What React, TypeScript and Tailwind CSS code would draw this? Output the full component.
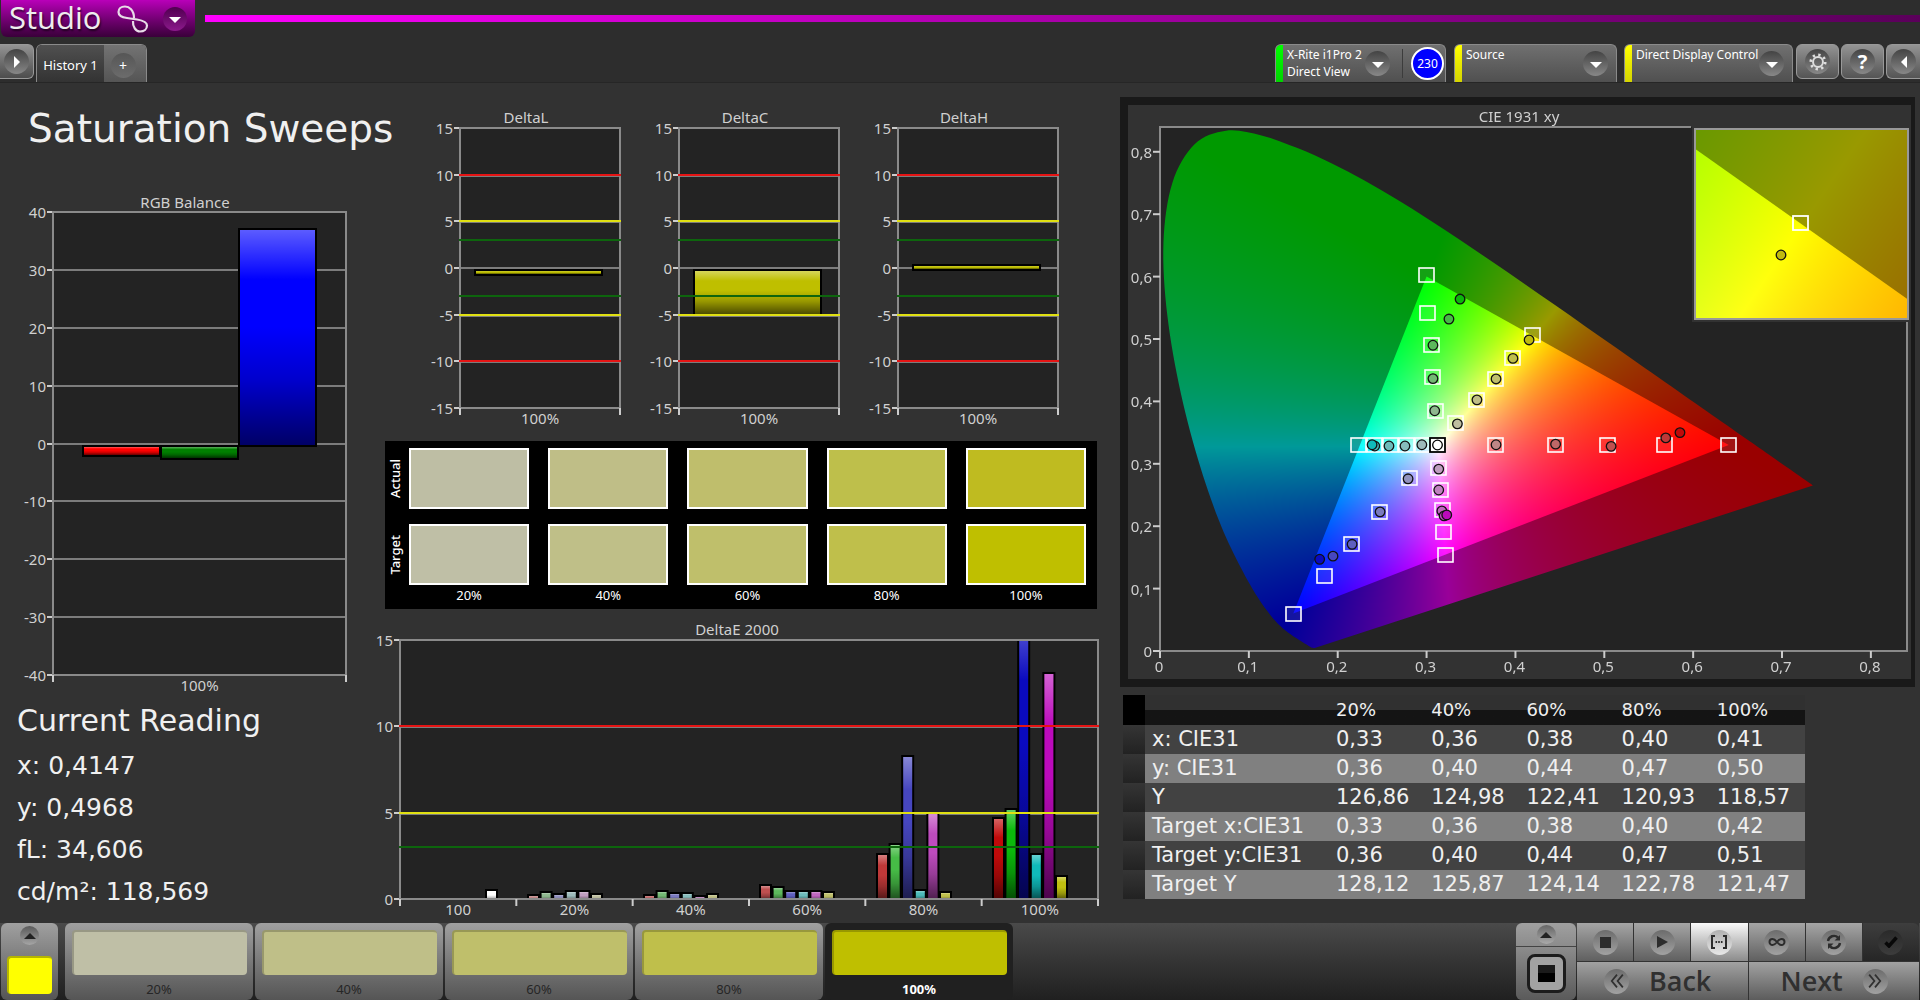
import { useEffect, useRef } from "react";
import type { ReactNode } from "react";

type Bar = { x: number; w: number; value: number; color: string };
type Limit = { value: number; color: string };

const LIMITS: Limit[] = [
  { value: 10, color: "#e51414" },
  { value: 5, color: "#e0e012" },
  { value: 3, color: "#0d650d" },
];
const BOTH_LIMITS: Limit[] = [...LIMITS, ...LIMITS.map((l) => ({ ...l, value: -l.value }))];

const STEPS = ["20%", "40%", "60%", "80%", "100%"];
const ACTUAL = ["#bebea4", "#bfbe87", "#bfbe6c", "#bebf4b", "#bfbb20"];
const TARGET = ["#bfbfa6", "#bfbf88", "#bfbf6b", "#bfbf4b", "#bfbf00"];

type BarChartProps = {
  id: string;
  title: string;
  titleX: number;
  titleY: number;
  width: number;
  height: number;
  plot: { x: number; y: number; w: number; h: number };
  min: number;
  max: number;
  step: number;
  categories: string[];
  bars: Bar[];
  limits?: Limit[];
};

function BarChart({ id, title, titleX, titleY, width, height, plot, min, max, step, categories, bars, limits = [] }: BarChartProps) {
  const yOf = (v: number) => Math.round(plot.y + ((max - v) / (max - min)) * plot.h);
  const ticks: number[] = [];
  for (let v = min; v <= max; v += step) ticks.push(v);
  const right = plot.x + plot.w;
  const bottom = plot.y + plot.h;
  const catW = plot.w / categories.length;
  // grid lines peek out just below the limit lines drawn over them
  const gridY = (v: number) => yOf(v) + (limits.length && v !== 0 ? 1 : 0);

  return (
    <svg viewBox={`0 0 ${width} ${height}`} className="block h-auto w-full" role="img" aria-label={title}>
      <defs>
        <linearGradient id={`${id}-gloss`} x1="0" y1="0" x2="0" y2="1">
          <stop offset="0" stopColor="#fff" stopOpacity="0.36" />
          <stop offset="0.23" stopColor="#fff" stopOpacity="0" />
          <stop offset="0.45" stopColor="#000" stopOpacity="0" />
          <stop offset="0.7" stopColor="#000" stopOpacity="0.2" />
          <stop offset="1" stopColor="#000" stopOpacity="0.6" />
        </linearGradient>
        <clipPath id={`${id}-clip`}>
          <rect x={plot.x} y={plot.y} width={plot.w} height={plot.h} />
        </clipPath>
      </defs>
      <text x={titleX} y={titleY} textAnchor="middle" fontSize="15" fill="#d0d0d0">{title}</text>
      <rect x={plot.x} y={plot.y} width={plot.w} height={plot.h} fill="#232323" />
      {ticks.map((v) => (
        <g key={v}>
          {v !== min && v !== max && (
            <line x1={plot.x} x2={right} y1={gridY(v)} y2={gridY(v)} stroke="#7c7c7c" strokeWidth="2" />
          )}
          <line x1={plot.x - 6} x2={plot.x} y1={yOf(v)} y2={yOf(v)} stroke="#ccc" strokeWidth="2" />
          <text x={plot.x - 7} y={yOf(v) + 6} textAnchor="end" fontSize="15" fill="#d0d0d0">{v}</text>
        </g>
      ))}
      <g clipPath={`url(#${id}-clip)`}>
        {bars.map((b, i) => {
          const top = yOf(Math.max(b.value, 0)) + (b.value < 0 ? 2 : 0);
          const end = yOf(Math.min(b.value, 0)) + (b.value > 0 ? 2 : 0);
          return (
            <g key={i} stroke="#000" strokeWidth="2">
              <rect x={b.x} y={top} width={b.w} height={end - top} fill={b.color} />
              <rect x={b.x + 1} y={top + 1} width={b.w - 2} height={Math.max(end - top - 2, 1)} fill={`url(#${id}-gloss)`} stroke="none" />
            </g>
          );
        })}
      </g>
      <rect x={plot.x} y={plot.y} width={plot.w} height={plot.h} fill="none" stroke="#8a8a8a" strokeWidth="2" />
      {limits.map((l) => (
        <line key={l.value} x1={plot.x - 1} x2={right + 1} y1={yOf(l.value)} y2={yOf(l.value)} stroke={l.color} strokeWidth="2" />
      ))}
      {categories.map((c, i) => (
        <text key={c} x={plot.x + catW * (i + 0.5)} y={bottom + 16} textAnchor="middle" fontSize="15" fill="#d0d0d0">{c}</text>
      ))}
      {[...categories, ""].map((_, i) => (
        <line key={i} x1={plot.x + catW * i} x2={plot.x + catW * i} y1={bottom} y2={bottom + 7} stroke="#ccc" strokeWidth="2" />
      ))}
    </svg>
  );
}

// DeltaE values per saturation step, order: R G B C M Y
const DELTA_E: { start: number; values: number[]; colors: string[] }[] = [
  { start: 157, values: [0.25, 0.38, 0.27, 0.48, 0.48, 0.28], colors: ["#bf8686", "#8fb88f", "#9292bf", "#9dbaba", "#bf9dbf", "#bfbfa0"] },
  { start: 273, values: [0.25, 0.48, 0.36, 0.36, 0.2, 0.28], colors: ["#bf6767", "#73b873", "#7a7abf", "#86bcbc", "#bf80bf", "#bfbf85"] },
  { start: 389, values: [0.8, 0.7, 0.48, 0.48, 0.48, 0.38], colors: ["#bf5050", "#5cb85c", "#5f5fbf", "#6cbaba", "#bf66bf", "#bfbf6b"] },
  { start: 506, values: [2.6, 3.2, 8.3, 0.55, 5, 0.4], colors: ["#bf3838", "#46bb46", "#4646bf", "#4bbaba", "#bd4bbd", "#bfbf4b"] },
  { start: 622, values: [4.7, 5.2, 16.5, 2.6, 13.1, 1.35], colors: ["#bf0a0a", "#0bb80b", "#0a0abf", "#10baba", "#bb0abb", "#bfbf10"] },
];

const deltaEBars: Bar[] = [
  { x: 116, w: 11, value: 0.55, color: "#ffffff" },
  ...DELTA_E.flatMap((g) => g.values.map((value, i) => ({ x: g.start + i * 12.6 + 1, w: 11, value, color: g.colors[i] }))),
];

const DELTAS = [
  { title: "DeltaL", value: -0.7 },
  { title: "DeltaC", value: -5 },
  { title: "DeltaH", value: 0.3 },
];

/* CIE 1931 diagram */

const CIE = { w: 783, h: 574, x: 32, y: 22, right: 779, bottom: 546, sx: 888.6, sy: 624 };
const INSET = { x: 567, y: 24, w: 213, h: 190, cx: 0.4193, cy: 0.5053, span: 0.05 };

type Point = [number, number];

const LOCUS: Point[] = [
  [0.1741, 0.005], [0.1714, 0.0051], [0.1689, 0.0069], [0.1644, 0.0109],
  [0.1566, 0.0177], [0.144, 0.0297], [0.1355, 0.0399], [0.1241, 0.0578], [0.1096, 0.0868], [0.0913, 0.1327],
  [0.0687, 0.2007], [0.0454, 0.295], [0.0235, 0.4127], [0.0082, 0.5384], [0.0039, 0.6548], [0.0139, 0.7502],
  [0.0389, 0.812], [0.0743, 0.8338], [0.1142, 0.8262], [0.1547, 0.8059], [0.1929, 0.7816], [0.2296, 0.7543],
  [0.2658, 0.7243], [0.3016, 0.6923], [0.3373, 0.6589], [0.3731, 0.6245], [0.4087, 0.5896], [0.4441, 0.5547],
  [0.4788, 0.5202], [0.5125, 0.4866], [0.5448, 0.4544], [0.5752, 0.4242], [0.6029, 0.3965], [0.627, 0.3725],
  [0.6482, 0.3514], [0.6658, 0.334], [0.6915, 0.3083], [0.714, 0.2859], [0.7347, 0.2653],
];
const GAMUT: Point[] = [[0.64, 0.33], [0.3, 0.6], [0.15, 0.06]];

const TARGETS: Point[] = [
  [0.223, 0.33], [0.241, 0.33], [0.259, 0.33], [0.277, 0.33], [0.2945, 0.33],
  [0.3775, 0.33], [0.444, 0.33], [0.5035, 0.33], [0.5675, 0.33], [0.6395, 0.33],
  [0.2995, 0.602], [0.3005, 0.541], [0.305, 0.49], [0.3065, 0.439], [0.309, 0.384],
  [0.419, 0.506], [0.3965, 0.47], [0.3775, 0.436], [0.356, 0.4025], [0.3325, 0.366],
  [0.313, 0.294], [0.3155, 0.258], [0.3175, 0.226], [0.319, 0.19], [0.3205, 0.1545],
  [0.28, 0.2765], [0.247, 0.222], [0.2155, 0.171], [0.185, 0.12], [0.15, 0.06],
];

const READINGS: [number, number, string][] = [
  [0.337, 0.564, "#0bb80b"], [0.3245, 0.532, "#46bb46"], [0.3065, 0.49, "#5cb85c"], [0.3065, 0.4365, "#73b873"], [0.3085, 0.385, "#8fb88f"],
  [0.4147, 0.4985, "#bfbb10"], [0.3965, 0.469, "#bfbf4b"], [0.3775, 0.436, "#bfbf6b"], [0.356, 0.4025, "#bfbf85"], [0.334, 0.364, "#bfbfa0"],
  [0.3775, 0.3305, "#bf8686"], [0.4445, 0.3315, "#bf6767"], [0.507, 0.328, "#bf5050"], [0.5685, 0.3415, "#bf3838"], [0.5845, 0.35, "#bf0a0a"],
  [0.294, 0.3305, "#9dbaba"], [0.275, 0.3285, "#86bcbc"], [0.257, 0.3285, "#6cbaba"], [0.241, 0.3285, "#4bbaba"], [0.238, 0.3305, "#10baba"],
  [0.313, 0.2915, "#bf9dbf"], [0.313, 0.258, "#bf80bf"], [0.3165, 0.2245, "#bf66bf"], [0.319, 0.2165, "#bd4bbd"], [0.322, 0.218, "#bb0abb"],
  [0.2785, 0.276, "#9292bf"], [0.247, 0.223, "#7a7abf"], [0.2155, 0.171, "#5f5fbf"], [0.194, 0.152, "#4646bf"], [0.179, 0.147, "#0a0abf"],
];

function xyToRgb(x: number, y: number): number[] {
  const Y = Math.max(y, 0.0001);
  const X = x / Y;
  const Z = (1 - x - y) / Y;
  const lin = [
    3.2406 * X - 1.5372 - 0.4986 * Z,
    -0.9689 * X + 1.8758 + 0.0415 * Z,
    0.0557 * X - 0.204 + 1.057 * Z,
  ].map((c) => Math.max(c, 0));
  const peak = Math.max(...lin);
  return lin.map((c) => (c / peak) * 255);
}

// Catmull-Rom through the sampled wavelengths, closed by the straight purple line
function traceLocus(ctx: CanvasRenderingContext2D, pts: Point[]) {
  ctx.moveTo(pts[0][0], pts[0][1]);
  for (let i = 0; i < pts.length - 1; i++) {
    const p0 = pts[Math.max(i - 1, 0)];
    const p1 = pts[i];
    const p2 = pts[i + 1];
    const p3 = pts[Math.min(i + 2, pts.length - 1)];
    ctx.bezierCurveTo(
      p1[0] + (p2[0] - p0[0]) / 6, p1[1] + (p2[1] - p0[1]) / 6,
      p2[0] - (p3[0] - p1[0]) / 6, p2[1] - (p3[1] - p1[1]) / 6,
      p2[0], p2[1],
    );
  }
}

function traceTriangle(ctx: CanvasRenderingContext2D, pts: Point[]) {
  pts.forEach(([x, y], i) => (i ? ctx.lineTo(x, y) : ctx.moveTo(x, y)));
}

type Area = { x: number; y: number; w: number; h: number };

function paintField(ctx: CanvasRenderingContext2D, area: Area, toXy: (px: number, py: number) => Point, toPx: (p: Point) => Point) {
  const layer = (dim: number, trace: () => void) => {
    const off = document.createElement("canvas");
    off.width = area.w;
    off.height = area.h;
    const octx = off.getContext("2d")!;
    const img = octx.createImageData(area.w, area.h);
    for (let j = 0; j < area.h; j++) {
      for (let i = 0; i < area.w; i++) {
        const [x, y] = toXy(area.x + i, area.y + j);
        const [r, g, b] = xyToRgb(x, y);
        const o = (j * area.w + i) * 4;
        img.data[o] = r * dim;
        img.data[o + 1] = g * dim;
        img.data[o + 2] = b * dim;
        img.data[o + 3] = 255;
      }
    }
    octx.putImageData(img, 0, 0);
    ctx.save();
    ctx.beginPath();
    ctx.rect(area.x, area.y, area.w, area.h);
    ctx.clip();
    ctx.beginPath();
    trace();
    ctx.closePath();
    ctx.clip();
    ctx.drawImage(off, area.x, area.y);
    ctx.restore();
  };
  layer(0.6, () => traceLocus(ctx, LOCUS.map(toPx)));
  layer(1, () => traceTriangle(ctx, GAMUT.map(toPx)));
}

const cieX = (x: number) => CIE.x + x * CIE.sx;
const cieY = (y: number) => CIE.bottom - y * CIE.sy;

function CieChart() {
  const ref = useRef<HTMLCanvasElement>(null);

  useEffect(() => {
    const ctx = ref.current?.getContext("2d");
    if (!ctx) return;
    ctx.fillStyle = "#232323";
    ctx.fillRect(CIE.x, CIE.y, CIE.right - CIE.x, CIE.bottom - CIE.y);
    paintField(
      ctx,
      { x: CIE.x, y: CIE.y, w: CIE.right - CIE.x, h: CIE.bottom - CIE.y },
      (px, py) => [(px - CIE.x) / CIE.sx, (CIE.bottom - py) / CIE.sy],
      ([x, y]) => [cieX(x), cieY(y)],
    );
    // zoomed view round the current target
    ctx.fillStyle = "#323232";
    ctx.fillRect(INSET.x - 3, 0, CIE.w - INSET.x + 3, INSET.y + INSET.h + 3);
    const kx = INSET.w / INSET.span;
    const ky = INSET.h / INSET.span;
    const mx = INSET.x + INSET.w / 2;
    const my = INSET.y + INSET.h / 2;
    paintField(
      ctx,
      INSET,
      (px, py) => [INSET.cx + (px - mx) / kx, INSET.cy - (py - my) / ky],
      ([x, y]) => [mx + (x - INSET.cx) * kx, my - (y - INSET.cy) * ky],
    );
  }, []);

  const axis = [0, 1, 2, 3, 4, 5, 6, 7, 8];
  const label = (n: number) => (n === 0 ? "0" : `0,${n}`);

  return (
    <div className="relative">
      <canvas ref={ref} width={CIE.w} height={CIE.h} className="block h-auto w-full" />
      <svg viewBox={`0 0 ${CIE.w} ${CIE.h}`} className="absolute inset-0 h-full w-full" role="img" aria-label="CIE 1931 xy">
        <text x="391" y="17" textAnchor="middle" fontSize="15" fill="#d0d0d0">CIE 1931 xy</text>
        <path d={`M${INSET.x - 4} ${CIE.y}H${CIE.x}V${CIE.bottom}H${CIE.right}V217`} fill="none" stroke="#8a8a8a" strokeWidth="2" />
        {axis.map((n) => (
          <g key={n} fontSize="15" fill="#d0d0d0">
            <line x1={cieX(n / 10)} x2={cieX(n / 10)} y1={CIE.bottom} y2={CIE.bottom + 7} stroke="#ccc" strokeWidth="2" />
            <line x1={CIE.x - 7} x2={CIE.x} y1={cieY(n / 10)} y2={cieY(n / 10)} stroke="#ccc" strokeWidth="2" />
            <text x={cieX(n / 10) - 1} y={CIE.bottom + 21} textAnchor="middle">{label(n)}</text>
            <text x={CIE.x - 8} y={cieY(n / 10) + 6} textAnchor="end">{label(n)}</text>
          </g>
        ))}
        {TARGETS.map(([x, y], i) => (
          <rect key={i} x={Math.round(cieX(x)) - 7} y={Math.round(cieY(y)) - 7} width="15" height="14" fill="#fff" fillOpacity="0.08" stroke="#fff" strokeWidth="1.6" />
        ))}
        {READINGS.map(([x, y, c], i) => (
          <circle key={i} cx={cieX(x) + 0.6} cy={cieY(y)} r="4.8" fill={c} stroke="#111" strokeWidth="1.3" />
        ))}
        <rect x="302" y="333" width="15" height="14" fill="#fff" stroke="#000" strokeWidth="1.8" />
        <circle cx="309.5" cy="340" r="4.8" fill="#fff" stroke="#000" strokeWidth="1.3" />
        <rect x={INSET.x} y={INSET.y} width={INSET.w} height={INSET.h} fill="none" stroke="#999" strokeWidth="2" />
        <rect x="665" y="111" width="15" height="14" fill="none" stroke="#fff" strokeWidth="1.8" />
        <circle cx="653" cy="150" r="4.8" fill="#bfbb10" stroke="#111" strokeWidth="1.3" />
      </svg>
    </div>
  );
}

const ROWS: [string, string[]][] = [
  ["x: CIE31", ["0,33", "0,36", "0,38", "0,40", "0,41"]],
  ["y: CIE31", ["0,36", "0,40", "0,44", "0,47", "0,50"]],
  ["Y", ["126,86", "124,98", "122,41", "120,93", "118,57"]],
  ["Target x:CIE31", ["0,33", "0,36", "0,38", "0,40", "0,42"]],
  ["Target y:CIE31", ["0,36", "0,40", "0,44", "0,47", "0,51"]],
  ["Target Y", ["128,12", "125,87", "124,14", "122,78", "121,47"]],
];

function ReadingsTable() {
  return (
    <div className="mt-2 mr-[115px] ml-[3px]">
      <table className="w-full table-fixed border-collapse text-left font-['DejaVu_Sans',sans-serif] text-[21px] text-[#f0f0f0]">
        <colgroup>
          <col className="w-[22px]" />
          <col className="w-[184px]" />
          <col span={5} />
        </colgroup>
        <thead>
          <tr className="h-[30px] text-[18px] leading-[30px]">
            <td className="bg-black p-0" />
            <td className="bg-linear-to-b from-[#303030] from-50% to-[#141414] to-50% p-0" />
            {STEPS.map((s) => (
              <th key={s} scope="col" className="bg-linear-to-b from-[#303030] from-50% to-[#141414] to-50% py-0 pr-0 pl-[7px] font-normal">{s}</th>
            ))}
          </tr>
        </thead>
        <tbody>
          {ROWS.map(([name, values], i) => (
            <tr key={name} className={i % 2 ? "h-[29px] bg-[#808080] leading-[29px]" : "h-[29px] bg-[#424242] leading-[29px]"}>
              <td className="bg-linear-to-b from-[#353535] to-[#222] p-0" />
              <th scope="row" className="py-0 pr-0 pl-[7px] font-normal whitespace-nowrap">{name}</th>
              {values.map((v, j) => (
                <td key={j} className="py-0 pr-0 pl-[7px]">{v}</td>
              ))}
            </tr>
          ))}
        </tbody>
      </table>
    </div>
  );
}

function SwatchRow({ name, colors }: { name: string; colors: string[] }) {
  return (
    <div className="flex items-center">
      <div className="flex w-5 justify-center">
        <span className="rotate-180 text-[13px] leading-4 font-medium text-white [writing-mode:vertical-rl]">{name}</span>
      </div>
      <div className="ml-1 grid flex-1 grid-cols-5 gap-[19px]">
        {colors.map((c) => (
          <div key={c} className="h-[61px] border-2 border-white" style={{ backgroundColor: c }} />
        ))}
      </div>
    </div>
  );
}

function Round({ children, className = "" }: { children: ReactNode; className?: string }) {
  return (
    <span className={`flex size-[25px] shrink-0 items-center justify-center rounded-full bg-linear-to-b from-[#444] to-[#888] ${className}`}>
      {children}
    </span>
  );
}

function Triangle({ dir, className }: { dir: "up" | "down" | "left" | "right"; className: string }) {
  const d = { up: "M0 9L6 3l6 6z", down: "M0 4h12L6 10z", left: "M9 0v12L3 6z", right: "M3 0v12l6-6z" }[dir];
  return (
    <svg viewBox="0 0 12 12" className={`size-3 ${className}`}>
      <path d={d} fill="currentColor" />
    </svg>
  );
}

function DeviceTab({ lines, strip, className, children }: { lines: string[]; strip: string; className: string; children?: ReactNode }) {
  return (
    <div className={`flex h-[38px] overflow-hidden rounded-t-md border border-b-0 border-[#8a8a8a] bg-linear-to-b from-[#707070] to-[#505050] ${className}`}>
      <span className={`w-[7px] shrink-0 ${strip}`} />
      <button className="flex min-w-0 flex-1 items-start text-left">
        <span className="flex-1 pt-px pl-1 text-[12px] leading-[17px] whitespace-nowrap text-white">
          {lines.map((l) => (
            <span key={l} className="block">{l}</span>
          ))}
        </span>
        <Round className={`mt-1.5 ${children ? "mr-3" : "mr-2"}`}>
          <Triangle dir="down" className="text-white" />
        </Round>
      </button>
      {children}
    </div>
  );
}

function ToolButton({ label, className = "", children }: { label: string; className?: string; children: ReactNode }) {
  return (
    <button aria-label={label} className={`flex h-[35px] items-center justify-center rounded-md border border-[#999] bg-linear-to-b from-[#949494] to-[#555] ${className}`}>
      <Round>{children}</Round>
    </button>
  );
}

function Header() {
  return (
    <header className="flex h-11 items-start pl-px">
      <button aria-label="Studio menu" className="flex h-[37px] w-[194px] items-center rounded-b-md bg-linear-to-b from-[#b900b9] to-[#3a003a] pl-2">
        <span className="w-[108px] pb-1 text-left font-['Open_Sans',sans-serif] text-[31px] leading-8 text-[#eee] [text-shadow:1px_2px_2px_rgba(0,0,0,0.6)]">Studio</span>
        <svg viewBox="0 0 32 28" className="h-7 w-8" fill="none" stroke="#e8dce8" strokeWidth="2.2">
          <path d="M17 13C17 5 12 1.500 8 1.500C4 1.500 1.500 4 1.500 7C1.500 11 6 12.500 10 13L20 14.500C26 15.500 30 17 30 20.500C30 24 27 26.500 23 26.500C19 26.500 15.500 22 16 16" />
        </svg>
        <span className="ml-[14px] flex size-6 items-center justify-center rounded-full bg-linear-to-b from-[#500050] to-[#8c1a8c]">
          <Triangle dir="down" className="text-white" />
        </span>
      </button>
      <div className="mt-[15px] ml-2.5 h-[7px] flex-1 bg-linear-to-r from-[#ff00ff] to-[#5a005a]" />
    </header>
  );
}

function TabBar() {
  return (
    <nav className="flex h-[39px] items-start border-b border-[#262626]">
      <button aria-label="Expand panel" className="flex h-[35px] w-[34px] items-center justify-center rounded-r-md border border-l-0 border-[#999] bg-linear-to-b from-[#949494] to-[#4d4d4d]">
        <Round>
          <Triangle dir="right" className="text-white" />
        </Round>
      </button>
      <div className="ml-0.5 flex h-[38px] w-[111px] overflow-hidden rounded-t-md border border-b-0 border-[#8a8a8a]">
        <button className="w-[67px] bg-linear-to-b from-[#505050] to-[#333] pt-1 text-[13px] whitespace-nowrap text-white">History 1</button>
        <button aria-label="Add tab" className="flex flex-1 items-center justify-center bg-linear-to-b from-[#737373] to-[#555] pt-1 pr-1">
          <span className="flex size-[25px] items-center justify-center rounded-full bg-linear-to-b from-[#565656] to-[#6c6c6c] text-[14px] leading-none text-white">+</span>
        </button>
      </div>
      <div className="flex-1" />
      <DeviceTab lines={["X-Rite i1Pro 2", "Direct View"]} strip="bg-linear-to-b from-[#00ff00] to-[#00d400]" className="w-[171px]">
        <div className="my-1 w-px bg-[#3c3c3c]" />
        <button className="my-auto ml-2 mr-px flex size-[33px] shrink-0 items-center justify-center rounded-full border-2 border-white bg-[#0000ff] text-[12px] text-white">230</button>
      </DeviceTab>
      <DeviceTab lines={["Source"]} strip="bg-linear-to-b from-[#ffff00] to-[#d4d400]" className="ml-2 w-[163px]" />
      <DeviceTab lines={["Direct Display Control"]} strip="bg-linear-to-b from-[#ffff00] to-[#d4d400]" className="ml-[7px] w-[169px]" />
      <ToolButton label="Settings" className="ml-[3px] w-[43px]">
        <svg viewBox="0 0 20 20" className="size-[18px]" fill="none" stroke="#ddd">
          <circle cx="10" cy="10" r="5.500" strokeWidth="2.200" />
          <circle cx="10" cy="10" r="8" strokeWidth="3" strokeDasharray="2.600 3.683" />
        </svg>
      </ToolButton>
      <ToolButton label="Help" className="ml-0.5 w-[43px]">
        <span className="text-[20px] leading-none font-bold text-white">?</span>
      </ToolButton>
      <ToolButton label="Collapse panel" className="ml-0.5 w-[34px] rounded-r-none border-r-0">
        <Triangle dir="left" className="text-white" />
      </ToolButton>
    </nav>
  );
}

function TransportButton({ label, className = "from-[#a6a6a6] to-[#606060]", round = "from-[#6c6c6c] to-[#a2a2a2]", children }: { label: string; className?: string; round?: string; children: ReactNode }) {
  return (
    <button aria-label={label} className={`flex h-[38px] items-center justify-center bg-linear-to-b ${className}`}>
      <span className={`flex size-[25px] items-center justify-center rounded-full bg-linear-to-b text-[#2c2c2c] ${round}`}>{children}</span>
    </button>
  );
}

function Footer() {
  return (
    <footer className="flex h-[77px] items-stretch bg-linear-to-b from-[#4a4a4a] to-[#202020] px-px">
      <button aria-label="Pattern colour" className="flex w-[57px] flex-col items-center rounded-md bg-linear-to-b from-[#a0a0a0] to-[#555] pt-[3px]">
        <span className="flex size-[19px] items-center justify-center rounded-full bg-linear-to-b from-[#5a5a5a] to-[#a6a6a6]">
          <Triangle dir="up" className="text-[#222]" />
        </span>
        <span className="mt-[11px] h-[38px] w-[45px] rounded-[4px] border-t-2 border-l-2 border-[#b5b500] bg-[#ffff00]" />
      </button>
      <div className="ml-[7px] flex gap-0.5">
        {STEPS.map((s, i) => {
          const active = i === STEPS.length - 1;
          return (
            <button
              key={s}
              className={`flex w-[188px] flex-col items-center rounded-md pt-[7px] text-[13px] ${active ? "bg-[#202020] font-bold text-white" : "bg-linear-to-b from-[#a0a0a0] to-[#555] text-[#262626]"}`}
            >
              <span className="h-[45px] w-[175px] rounded-[4px] border-t-2 border-l-2 border-black/20" style={{ backgroundColor: TARGET[i] }} />
              <span className="mt-1 leading-5">{s}</span>
            </button>
          );
        })}
      </div>
      <div className="flex-1" />
      <div className="flex w-[60px] flex-col overflow-hidden rounded-md bg-[#444]">
        <button aria-label="Open pattern options" className="flex h-[23px] items-center justify-center bg-linear-to-b from-[#a0a0a0] to-[#8c8c8c]">
          <span className="flex size-[19px] items-center justify-center rounded-full bg-linear-to-b from-[#666] to-[#aaa]">
            <Triangle dir="up" className="text-[#222]" />
          </span>
        </button>
        <button aria-label="Pattern window" className="mt-px flex flex-1 items-center justify-center bg-linear-to-b from-[#8c8c8c] to-[#5a5a5a]">
          <span className="flex size-[39px] items-center justify-center rounded-lg border-[3px] border-[#1c1c1c] bg-[#a2a2a2]">
            <span className="size-[17px] bg-linear-to-b from-[#1a1a1a] from-50% to-black to-50%" />
          </span>
        </button>
      </div>
      <div className="ml-px grid w-[342px] grid-cols-6 gap-px bg-[#333]">
        <TransportButton label="Stop"><span className="size-[11px] bg-[#2c2c2c]" /></TransportButton>
        <TransportButton label="Play">
          <svg viewBox="0 0 12 12" className="size-3"><path d="M1 0l11 6L1 12z" fill="currentColor" /></svg>
        </TransportButton>
        <TransportButton label="Read series" className="from-[#fafafa] to-[#8c8c8c]" round="from-[#b0b0b0] to-[#e8e8e8]">
          <svg viewBox="0 0 16 14" className="h-3.5 w-4" fill="none" stroke="currentColor" strokeWidth="2">
            <path d="M4 1H1v12h3M12 1h3v12h-3" />
            <path d="M4.500 7h7" strokeDasharray="1.600 1.100" />
          </svg>
        </TransportButton>
        <TransportButton label="Read continuously">
          <svg viewBox="0 0 18 8" className="h-2 w-[18px]" fill="none" stroke="currentColor" strokeWidth="2">
            <path d="M9 4C7 1.500 6 1 4.500 1a3 3 0 000 6C6 7 7 6.500 9 4s3-3 4.500-3a3 3 0 010 6C12 7 11 6.500 9 4z" />
          </svg>
        </TransportButton>
        <TransportButton label="Refresh">
          <svg viewBox="0 0 16 16" className="size-4" fill="none" stroke="currentColor" strokeWidth="2.400">
            <path d="M2 7a6 6 0 0110-3.500M14 9a6 6 0 01-10 3.500" />
            <path d="M14 1v5.500H8.500zM2 15V9.500h5.500z" fill="currentColor" stroke="none" />
          </svg>
        </TransportButton>
        <TransportButton label="Accept" className="rounded-tr-md from-[#3e3e3e] to-[#262626]" round="from-[#2a2a2a] to-[#3c3c3c]">
          <svg viewBox="0 0 14 12" className="h-3 w-3.5" fill="none" stroke="#080808" strokeWidth="3.500">
            <path d="M1.500 6.500L5 10l7.500-8.500" />
          </svg>
        </TransportButton>
        <button className="col-span-3 flex h-[38px] items-center bg-linear-to-b from-[#a2a2a2] to-[#5c5c5c] pl-[27px] font-['Open_Sans',sans-serif] text-[27px] font-semibold text-[#303030]">
          <span className="mr-5 flex size-[25px] items-center justify-center rounded-full bg-linear-to-b from-[#6c6c6c] to-[#a2a2a2]">
            <svg viewBox="0 0 12 12" className="size-3.5" fill="none" stroke="currentColor" strokeWidth="1.500"><path d="M6 .5L1.500 6 6 11.500M11 .5L6.500 6 11 11.500" /></svg>
          </span>
          Back
        </button>
        <button className="col-span-3 flex h-[38px] items-center bg-linear-to-b from-[#a2a2a2] to-[#5c5c5c] pl-8 font-['Open_Sans',sans-serif] text-[27px] font-semibold text-[#303030]">
          Next
          <span className="ml-5 flex size-[25px] items-center justify-center rounded-full bg-linear-to-b from-[#6c6c6c] to-[#a2a2a2]">
            <svg viewBox="0 0 12 12" className="size-3.5" fill="none" stroke="currentColor" strokeWidth="1.500"><path d="M1 .5L5.500 6 1 11.500M6 .5L10.500 6 6 11.500" /></svg>
          </span>
        </button>
      </div>
    </footer>
  );
}

export default function App() {
  return (
    <div className="flex min-h-screen flex-col bg-[#2d2d2d] font-['Noto_Sans',sans-serif] text-[#f0f0f0]">
      <Header />
      <TabBar />
      <main className="grid flex-1 grid-cols-[370fr_750fr_800fr] bg-[#323232]">
        {/* Title, RGB balance and live reading */}
        <section className="min-w-0">
          <h1 className="mb-9 pt-5 pl-7 font-['DejaVu_Sans',sans-serif] text-[39px] leading-[52px] whitespace-nowrap">Saturation Sweeps</h1>
          <BarChart
            id="rgb"
            title="RGB Balance"
            titleX={185}
            titleY={17}
            width={370}
            height={506}
            plot={{ x: 53, y: 21, w: 293, h: 463 }}
            min={-40}
            max={40}
            step={10}
            categories={["100%"]}
            bars={[
              { x: 83, w: 77, value: -2.2, color: "#ff0000" },
              { x: 161, w: 77, value: -2.6, color: "#008000" },
              { x: 239, w: 77, value: 37, color: "#0000ff" },
            ]}
          />
          <div className="pl-[17px] font-['DejaVu_Sans',sans-serif]">
            <h2 className="text-[30px] leading-[48px]">Current Reading</h2>
            <div className="text-[25px] leading-[42px]">
              <p>x: 0,4147</p>
              <p>y: 0,4968</p>
              <p>fL: 34,606</p>
              <p>cd/m²: 118,569</p>
            </div>
          </div>
        </section>

        {/* Delta charts and swatches */}
        <section className="min-w-0">
          <div className="grid grid-cols-3 pt-[23px] pr-[53px] pl-10">
            {DELTAS.map((d) => (
              <BarChart
                key={d.title}
                id={d.title}
                title={d.title}
                titleX={116}
                titleY={17}
                width={219}
                height={325}
                plot={{ x: 50, y: 22, w: 160, h: 280 }}
                min={-15}
                max={15}
                step={5}
                categories={["100%"]}
                bars={[{ x: 65, w: 127, value: d.value, color: "#bfbf00" }]}
                limits={BOTH_LIMITS}
              />
            ))}
          </div>
          <div className="mt-2.5 mr-[23px] ml-[15px] flex h-[168px] flex-col bg-black pt-[7px] pr-[11px]">
            <SwatchRow name="Actual" colors={ACTUAL} />
            <div className="h-[15px]" />
            <SwatchRow name="Target" colors={TARGET} />
            <div className="grid grid-cols-5 gap-[19px] pl-6 text-center text-[13px] leading-5 text-white">
              {STEPS.map((s) => (
                <span key={s}>{s}</span>
              ))}
            </div>
          </div>
          <div className="mt-1">
            <BarChart
              id="de"
              title="DeltaE 2000"
              titleX={367}
              titleY={22}
              width={750}
              height={310}
              plot={{ x: 30, y: 27, w: 698, h: 259 }}
              min={0}
              max={15}
              step={5}
              categories={["100", ...STEPS]}
              bars={deltaEBars}
              limits={LIMITS}
            />
          </div>
        </section>

        {/* Chromaticity */}
        <section className="min-w-0 pt-3.5">
          <div className="mr-[5px] border-8 border-r-4 border-[#191919]">
            <CieChart />
          </div>
          <ReadingsTable />
        </section>
      </main>
      <Footer />
    </div>
  );
}
